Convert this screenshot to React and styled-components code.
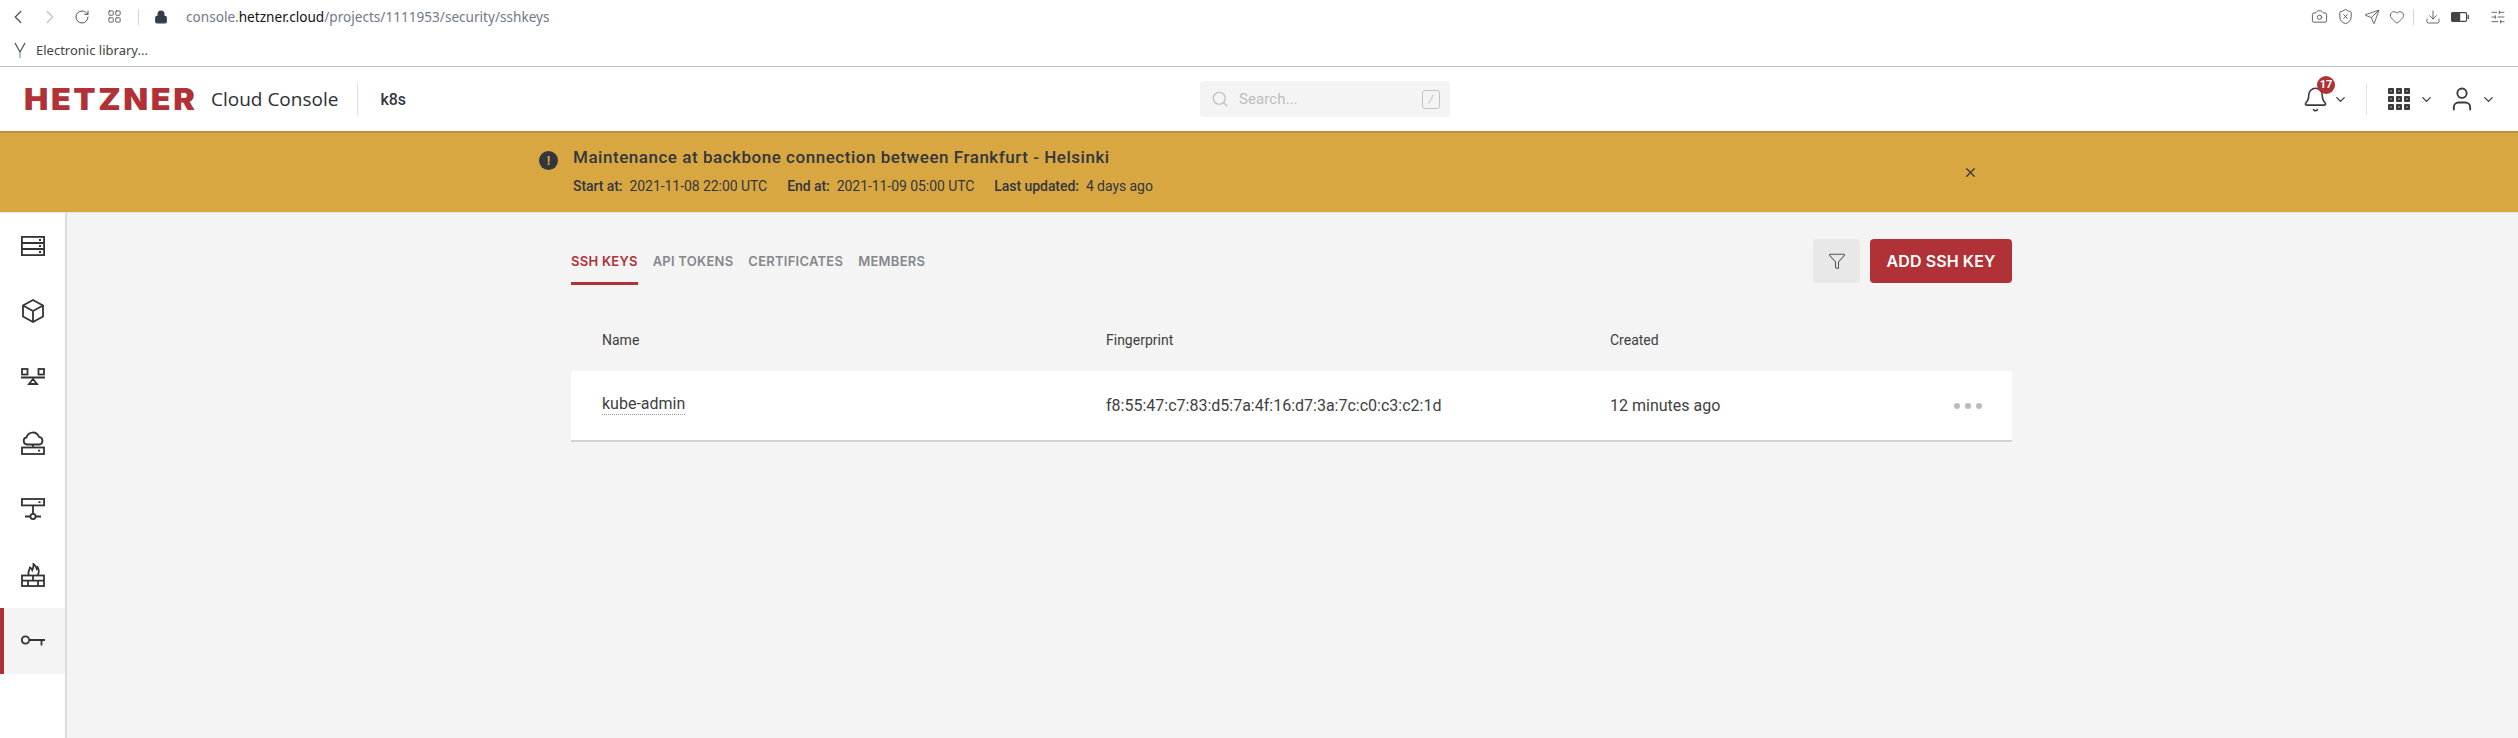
import React from 'react';
import styled, { createGlobalStyle } from 'styled-components';
import {
  ChevronLeft, ChevronRight, RotateCw, LayoutGrid, Lock, Camera, ShieldX, Send, Heart,
  Download, SlidersHorizontal, Bell, ChevronDown, User, Search, Filter, X,
} from 'lucide-react';

const GlobalStyle = createGlobalStyle`
  html, body { margin: 0; padding: 0; height: 100%; overflow: hidden; }
  body { font-family: Roboto, "Liberation Sans", sans-serif; color: #3a3a3a; background: #fff; }
  #root { height: 100%; }
  * { box-sizing: border-box; }
`;

const Page = styled.div`
  display: flex;
  flex-direction: column;
  height: 100vh;
`;

/* browser chrome */
const BrowserChrome = styled.div`
  height: 67px;
  flex: none;
  border-bottom: 1px solid #b8c0cc;
  background: #fff;
`;

const AddressRow = styled.div`
  height: 33px;
  display: flex;
  align-items: center;
  padding-left: 10px;
  color: #4b5563;
`;

const NavIcon = styled.span`
  width: ${(p) => p.$w || 32}px;
  flex: none;
  display: flex;
  justify-content: center;
  opacity: ${(p) => (p.$dim ? 0.35 : 1)};
  svg { flex: none; }
`;

const ChromeSep = styled.span`
  width: 1px;
  height: 16px;
  flex: none;
  background: #d0d4da;
  margin: 0 ${(p) => p.$m ?? 10}px;
`;

const Url = styled.div`
  font-family: "Noto Sans", sans-serif;
  font-size: 13.6px;
  color: #70798a;
  margin-left: 3px;
  b { font-weight: 400; color: #111; }
`;

const RightIcons = styled.div`
  margin-left: auto;
  display: flex;
  align-items: center;
`;

const BookmarkRow = styled.div`
  height: 33px;
  display: flex;
  align-items: center;
  padding-left: 14px;
  gap: 10px;
  font-family: "Noto Sans", sans-serif;
  font-size: 13px;
  color: #444;
`;

/* app header */
const Header = styled.header`
  height: 66px;
  flex: none;
  display: flex;
  align-items: center;
  background: #fff;
  border-bottom: 2px solid #b8923c;
  position: relative;
`;

const Logo = styled.div`
  margin-left: 24px;
  width: 171px;
  font-family: Inter, sans-serif;
  font-weight: 900;
  font-size: 30px;
  line-height: 30px;
  letter-spacing: 2.4px;
  color: #b03237;
  white-space: nowrap;
  transform: scaleX(1.08);
  transform-origin: left center;
`;

const Product = styled.div`
  margin-left: 16px;
  font-family: "Open Sans", sans-serif;
  font-size: 19px;
  font-weight: 500;
  color: #2c2f36;
`;

const HeaderDivider = styled.span`
  width: 1px;
  height: 32px;
  flex: none;
  background: #e2e2e2;
  margin: ${(p) => p.$m || '0'};
`;

const Project = styled.div`
  font-size: 16px;
  font-weight: 500;
  color: #33363d;
`;

const SearchBox = styled.div`
  position: absolute;
  left: 1200px;
  top: 14px;
  width: 250px;
  height: 36px;
  background: #f4f4f4;
  border-radius: 4px;
  display: flex;
  align-items: center;
  padding: 0 10px 0 11px;
  gap: 10px;
  font-size: 15px;
  letter-spacing: 0.1px;
  color: #bdbdbd;
`;

const SlashKey = styled.span`
  margin-left: auto;
  width: 18px;
  height: 19px;
  border: 1px solid #c4c4c4;
  border-radius: 3px;
  font-size: 11px;
  font-style: italic;
  display: flex;
  align-items: center;
  justify-content: center;
`;

const HeaderActions = styled.div`
  margin-left: auto;
  display: flex;
  align-items: center;
  color: #3a3a3a;
`;

const BellWrap = styled.div`
  position: relative;
  display: flex;
  align-items: center;
`;

const Badge = styled.span`
  position: absolute;
  left: 15px;
  top: -10px;
  width: 18px;
  height: 18px;
  border-radius: 50%;
  background: #b03237;
  color: #fff;
  font-size: 11px;
  font-weight: 700;
  display: flex;
  align-items: center;
  justify-content: center;
`;

const Caret = styled(ChevronDown)`
  flex: none;
  margin: ${(p) => p.$m};
`;

const MenuGrid = styled.div`
  display: grid;
  grid-template-columns: repeat(3, 6px);
  gap: 2px;
  span {
    width: 6px;
    height: 6px;
    border: 2px solid #3a3a3a;
    background: #777;
    border-radius: 1px;
  }
`;

/* banner */
const Banner = styled.div`
  height: 80px;
  flex: none;
  background: #d9a742;
  border-bottom: 1px solid #e4e4e4;
`;

const BannerInner = styled.div`
  width: 1440px;
  height: 100%;
  margin: 0 auto;
  display: flex;
  align-items: center;
  color: #33363d;
`;

const AlertDot = styled.span`
  width: 19px;
  height: 19px;
  flex: none;
  border-radius: 50%;
  background: #33363d;
  color: #d9a742;
  font-size: 13px;
  font-weight: 700;
  display: flex;
  align-items: center;
  justify-content: center;
  margin: 18px 15px 0 0;
  align-self: flex-start;
`;

const BannerText = styled.div`
  margin-top: -3px;
`;

const BannerTitle = styled.div`
  font-size: 17px;
  font-weight: 500;
  letter-spacing: 0.53px;
  line-height: 20px;
  margin-bottom: 10px;
`;

const BannerMeta = styled.div`
  display: flex;
  gap: 20px;
  font-size: 14px;
  line-height: 18px;
  letter-spacing: -0.06px;
  b { font-weight: 500; margin-right: 7px; }
`;

const CloseBtn = styled.span`
  margin-left: auto;
  margin-right: 1px;
  display: flex;
`;

/* body */
const Body = styled.div`
  flex: 1;
  display: flex;
  min-height: 0;
`;

const Sidebar = styled.nav`
  width: 67px;
  flex: none;
  background: #fff;
  border-right: 2px solid #dcdcdc;
`;

const SideItem = styled.div`
  height: 66px;
  display: flex;
  align-items: center;
  justify-content: center;
  color: #333;
  background: ${(p) => (p.$active ? '#f4f4f4' : 'transparent')};
  box-shadow: ${(p) => (p.$active ? 'inset 4px 0 0 #b03237' : 'none')};
  &:first-child { height: 65px; }
`;

const Main = styled.main`
  flex: 1;
  background: #f4f4f4;
  padding-top: 26px;
`;

const Column = styled.div`
  width: 1441px;
  margin-left: 504px;
`;

const Toolbar = styled.div`
  height: 46px;
  display: flex;
  align-items: flex-end;
  justify-content: space-between;
`;

const Tabs = styled.div`
  display: flex;
  gap: 15px;
`;

const Tab = styled.div`
  height: 46px;
  display: flex;
  align-items: center;
  font-family: Inter, sans-serif;
  font-size: 13px;
  font-weight: 600;
  letter-spacing: 0.25px;
  color: ${(p) => (p.$active ? '#b03237' : '#85878c')};
  border-bottom: 3px solid ${(p) => (p.$active ? '#b03237' : 'transparent')};
  padding-top: 1px;
`;

const Actions = styled.div`
  display: flex;
  gap: 10px;
  height: 44px;
  align-self: flex-start;
`;

const FilterBtn = styled.div`
  width: 47px;
  background: #e8e8e8;
  border-radius: 4px;
  display: flex;
  align-items: center;
  justify-content: center;
  color: #555;
`;

const AddBtn = styled.div`
  width: 142px;
  background: #b03237;
  border-radius: 4px;
  color: #fff;
  font-family: Inter, sans-serif;
  font-size: 16px;
  font-weight: 600;
  letter-spacing: 0.1px;
  display: flex;
  align-items: center;
  justify-content: center;
`;

const Grid = styled.div`
  display: grid;
  grid-template-columns: 504px 504px 1fr;
  padding-left: 31px;
  align-items: center;
`;

const HeadRow = styled(Grid)`
  height: 86px;
  padding-top: 23px;
  font-size: 14px;
  color: #3f3f3f;
`;

const KeyRow = styled(Grid)`
  height: 71px;
  background: #fff;
  border-bottom: 2px solid #d2d2d2;
  font-size: 16px;
  color: #3f3f3f;
  padding-right: 30px;
`;

const KeyName = styled.span`
  justify-self: start;
  border-bottom: 1px dotted #999;
  padding-bottom: 1px;
  margin-top: -2px;
`;

const LastCell = styled.div`
  display: flex;
  align-items: center;
  justify-content: space-between;
`;

const Dots = styled.div`
  display: flex;
  gap: 5px;
  span {
    width: 6px;
    height: 6px;
    border-radius: 50%;
    background: #bbb;
  }
`;

const Svg = ({ children }) => (
  <svg width={24} height={24} viewBox="0 0 24 24" fill="none" stroke="currentColor" strokeWidth="1.8">
    {children}
  </svg>
);

const ServerIcon = () => (
  <Svg>
    <rect x="0.9" y="2.9" width="22.2" height="18.2" />
    <path d="M1 9h22M1 15h22M18 6h2M18 12h2M18 18h2" />
  </Svg>
);
const CubeIcon = () => (
  <Svg>
    <path d="M12 1L22 6.5v11L12 23 2 17.5v-11z" />
    <path d="M2 6.5L12 12l10-5.5M12 12v11" />
  </Svg>
);
const BalancerIcon = () => (
  <Svg>
    <rect x="1" y="4" width="5.5" height="5.5" />
    <rect x="17.5" y="4" width="5.5" height="5.5" />
    <path d="M0 12.5h24M12 14l-4 5h8z" />
  </Svg>
);
const CloudServerIcon = () => (
  <Svg>
    <path d="M6 13.5a3.6 3.6 0 0 1-.5-7.1 6.5 6.5 0 0 1 12.4-.6 3.9 3.9 0 0 1 .5 7.7z" />
    <path d="M12 13.5V16" />
    <rect x="1" y="16.5" width="22" height="6.5" />
    <path d="M17 19.7h2" />
  </Svg>
);
const NetworkIcon = () => (
  <Svg>
    <rect x="0.9" y="2" width="22.2" height="6.4" />
    <path d="M17.5 5.2h2M12 8.4v8.5M4 19.5h5M15 19.5h5" />
    <circle cx="12" cy="19.5" r="2.6" />
  </Svg>
);
const FirewallIcon = () => (
  <Svg>
    <path d="M8 12.5c-2-3 .5-4.5 1-8 1.5.6 2 1.6 2.3 2.6C12.2 5.5 12.6 3 12.5 1c2.5 2 3 3.5 3.2 5 .5-.4.8-.9 1-1.5 1.5 2.5 1.3 5.500 0 8" />
    <rect x="1" y="12.5" width="22" height="10.5" />
    <path d="M1 17.7h22M12 12.5v5.200M7 17.700V23M17 17.700V23" />
  </Svg>
);
const KeyIcon = () => (
  <Svg>
    <circle cx="4.500" cy="11" r="3.700" />
    <path d="M8.200 11H24M20.500 11v5.500" />
  </Svg>
);
const SignalIcon = () => (
  <svg width="12" height="20" viewBox="0 0 12 20" fill="none" strokeWidth="1.3">
    <path d="M1 3l5 9 5-9" stroke="#555" />
    <path d="M6 12v6" stroke="#6aa6d6" />
  </svg>
);
const BatteryIcon = () => (
  <svg width="18" height="10" viewBox="0 0 18 10" fill="none" stroke="#444" strokeWidth="1.2">
    <rect x="0.600" y="0.600" width="15" height="8.800" rx="1.500" />
    <rect x="0.600" y="0.600" width="8" height="8.800" rx="1.500" fill="#444" />
    <path d="M17.300 3v4" />
  </svg>
);

const sideIcons = [ServerIcon, CubeIcon, BalancerIcon, CloudServerIcon, NetworkIcon, FirewallIcon, KeyIcon];

const App = () => (
  <Page>
    <GlobalStyle />
    <BrowserChrome>
      <AddressRow>
        <NavIcon $w={16}><ChevronLeft size={22} strokeWidth={1.4} /></NavIcon>
        <NavIcon $w={48} $dim><ChevronRight size={22} strokeWidth={1.4} /></NavIcon>
        <NavIcon $w={16}><RotateCw size={16} strokeWidth={1.5} /></NavIcon>
        <NavIcon $w={48}><LayoutGrid size={15} strokeWidth={1.4} /></NavIcon>
        <ChromeSep $m={0} />
        <NavIcon $w={44}><Lock size={14} fill="#333c4a" strokeWidth={2} color="#333c4a" /></NavIcon>
        <Url>console.<b>hetzner.cloud</b>/projects/1111953/security/sshkeys</Url>
        <RightIcons>
          <NavIcon $w={36}><Camera size={17} strokeWidth={1.3} /></NavIcon>
          <NavIcon $w={16}><ShieldX size={17} strokeWidth={1.3} /></NavIcon>
          <NavIcon $w={38}><Send size={16} strokeWidth={1.3} /></NavIcon>
          <NavIcon $w={12}><Heart size={16} strokeWidth={1.3} /></NavIcon>
          <ChromeSep $m={10} />
          <NavIcon $w={18}><Download size={16} strokeWidth={1.3} /></NavIcon>
          <NavIcon $w={36}><BatteryIcon /></NavIcon>
          <NavIcon $w={40}><SlidersHorizontal size={16} strokeWidth={1.3} /></NavIcon>
        </RightIcons>
      </AddressRow>
      <BookmarkRow>
        <SignalIcon />
        <span>Electronic library...</span>
      </BookmarkRow>
    </BrowserChrome>

    <Header>
      <Logo>HETZNER</Logo>
      <Product>Cloud Console</Product>
      <HeaderDivider $m="0 22px 0 19px" />
      <Project>k8s</Project>
      <SearchBox>
        <Search size={18} strokeWidth={1.6} />
        <span>Search...</span>
        <SlashKey>/</SlashKey>
      </SearchBox>
      <HeaderActions>
        <BellWrap>
          <Bell size={27} strokeWidth={1.4} />
          <Badge>17</Badge>
        </BellWrap>
        <Caret size={15} strokeWidth={2} $m="0 0 0 4px" />
        <HeaderDivider $m="0 21px 0 18px" />
        <MenuGrid>{Array.from({ length: 9 }, (_, i) => <span key={i} />)}</MenuGrid>
        <Caret size={15} strokeWidth={2} $m="0 14px 0 9px" />
        <User size={28} strokeWidth={1.6} />
        <Caret size={15} strokeWidth={2} $m="0 22px 0 5px" />
      </HeaderActions>
    </Header>

    <Banner>
      <BannerInner>
        <AlertDot>!</AlertDot>
        <BannerText>
          <BannerTitle>Maintenance at backbone connection between Frankfurt - Helsinki</BannerTitle>
          <BannerMeta>
            <span><b>Start at:</b>2021-11-08 22:00 UTC</span>
            <span><b>End at:</b>2021-11-09 05:00 UTC</span>
            <span><b>Last updated:</b>4 days ago</span>
          </BannerMeta>
        </BannerText>
        <CloseBtn><X size={15} strokeWidth={2} /></CloseBtn>
      </BannerInner>
    </Banner>

    <Body>
      <Sidebar>
        {sideIcons.map((Icon, i) => (
          <SideItem key={i} $active={i === sideIcons.length - 1}><Icon /></SideItem>
        ))}
      </Sidebar>
      <Main>
        <Column>
          <Toolbar>
            <Tabs>
              <Tab $active>SSH KEYS</Tab>
              <Tab>API TOKENS</Tab>
              <Tab>CERTIFICATES</Tab>
              <Tab>MEMBERS</Tab>
            </Tabs>
            <Actions>
              <FilterBtn><Filter size={18} strokeWidth={1.4} /></FilterBtn>
              <AddBtn>ADD SSH KEY</AddBtn>
            </Actions>
          </Toolbar>
          <HeadRow>
            <span>Name</span>
            <span>Fingerprint</span>
            <span>Created</span>
          </HeadRow>
          <KeyRow>
            <KeyName>kube-admin</KeyName>
            <span>f8:55:47:c7:83:d5:7a:4f:16:d7:3a:7c:c0:c3:c2:1d</span>
            <LastCell>
              <span>12 minutes ago</span>
              <Dots><span /><span /><span /></Dots>
            </LastCell>
          </KeyRow>
        </Column>
      </Main>
    </Body>
  </Page>
);

export default App;
